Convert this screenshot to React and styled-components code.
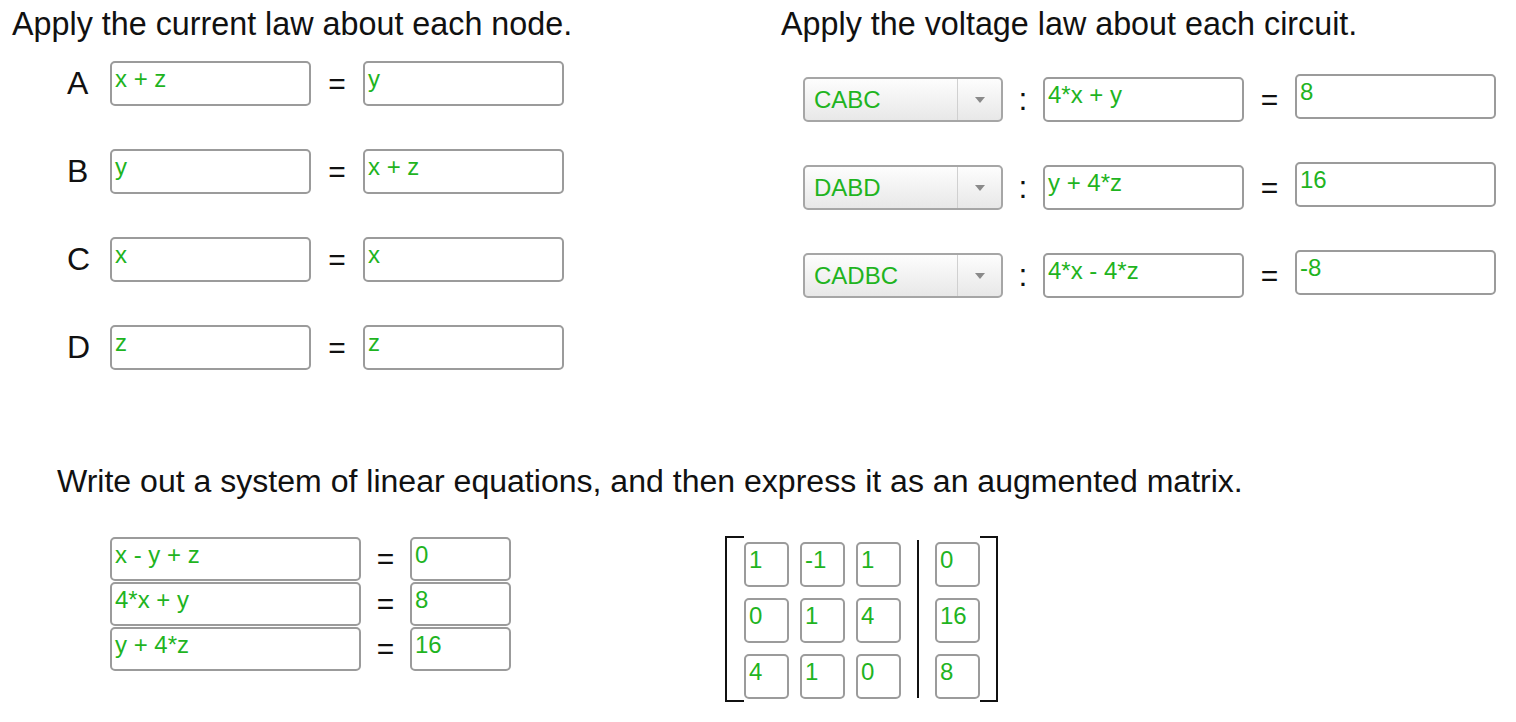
import React from 'react';
import styled, {createGlobalStyle} from 'styled-components';

const GREEN = '#1fb41f';

const nodes = [
  {label: 'A', left: 'x + z', right: 'y'},
  {label: 'B', left: 'y', right: 'x + z'},
  {label: 'C', left: 'x', right: 'x'},
  {label: 'D', left: 'z', right: 'z'},
];

const circuits = [
  {loop: 'CABC', left: '4*x + y', right: '8'},
  {loop: 'DABD', left: 'y + 4*z', right: '16'},
  {loop: 'CADBC', left: '4*x - 4*z', right: '-8'},
];

const system = [
  {left: 'x - y + z', right: '0'},
  {left: '4*x + y', right: '8'},
  {left: 'y + 4*z', right: '16'},
];

const matrix = [
  ['1', '-1', '1'],
  ['0', '1', '4'],
  ['4', '1', '0'],
];
const augmented = ['0', '16', '8'];

const App = () => {
  return (
    <>
      <GlobalStyle />
      <ScPage>
        <ScTopRow>
          <ScSection $width={769}>
            <ScHeading>Apply the current law about each node.</ScHeading>
            <ScNodeList>
              {nodes.map((n) => (
                <ScRow key={n.label}>
                  <ScNodeLabel>{n.label}</ScNodeLabel>
                  <ScField $w={201} $h={45}>{n.left}</ScField>
                  <ScEquals $w={52}>=</ScEquals>
                  <ScField $w={201} $h={45} $drop={1}>{n.right}</ScField>
                </ScRow>
              ))}
            </ScNodeList>
          </ScSection>
          <ScSection>
            <ScHeading>Apply the voltage law about each circuit.</ScHeading>
            <ScCircuitList>
              {circuits.map((c) => (
                <ScCircuitRow key={c.loop}>
                  <ScSelect>
                    <ScSelectValue>{c.loop}</ScSelectValue>
                    <ScSelectToggle>
                      <ScArrow />
                    </ScSelectToggle>
                  </ScSelect>
                  <ScColon>:</ScColon>
                  <ScField $w={201} $h={45} $drop={3}>{c.left}</ScField>
                  <ScEquals $w={51} $drop={3}>=</ScEquals>
                  <ScField $w={201} $h={45}>{c.right}</ScField>
                </ScCircuitRow>
              ))}
            </ScCircuitList>
          </ScSection>
        </ScTopRow>

        <ScBottom>
          <ScHeading $size={32.05}>
            Write out a system of linear equations, and then express it as an augmented matrix.
          </ScHeading>
          <ScBottomRow>
            <ScSystem>
              {system.map((s) => (
                <ScRow key={s.left}>
                  <ScField $w={251} $h={44}>{s.left}</ScField>
                  <ScEquals $w={49}>=</ScEquals>
                  <ScField $w={101} $h={44}>{s.right}</ScField>
                </ScRow>
              ))}
            </ScSystem>

            <ScMatrix>
              <ScBracket $side="left" />
              <ScCells $cols={3}>
                {matrix.flat().map((v, i) => (
                  <ScField key={i} $w={45} $h={45}>{v}</ScField>
                ))}
              </ScCells>
              <ScDivider />
              <ScCells $cols={1}>
                {augmented.map((v, i) => (
                  <ScField key={i} $w={45} $h={45}>{v}</ScField>
                ))}
              </ScCells>
              <ScBracket $side="right" />
            </ScMatrix>
          </ScBottomRow>
        </ScBottom>
      </ScPage>
    </>
  );
};

const GlobalStyle = createGlobalStyle`
  body {
    margin: 0;
    background: #fff;
    font-family: "Liberation Sans", Arial, sans-serif;
    color: #111;
  }
`;

const ScPage = styled.div`
  padding: 6px 0 0 12px;
`;

const ScTopRow = styled.div`
  display: flex;
`;

const ScSection = styled.section`
  width: ${(p) => (p.$width ? `${p.$width}px` : 'auto')};
  flex-shrink: 0;
`;

const ScHeading = styled.h2`
  margin: 0;
  font-size: ${(p) => p.$size || 32.3}px;
  font-weight: 400;
  line-height: 37px;
  color: #111;
  white-space: nowrap;
`;

const ScNodeList = styled.div`
  display: flex;
  flex-direction: column;
  gap: 42px;
  margin-top: 17px;
  padding-left: 55px;
`;

const ScRow = styled.div`
  display: flex;
  align-items: center;
`;

const ScNodeLabel = styled.span`
  width: 43px;
  font-size: 32px;
  line-height: 45px;
`;

const ScField = styled.div`
  box-sizing: border-box;
  width: ${(p) => p.$w}px;
  height: ${(p) => p.$h}px;
  margin-top: ${(p) => p.$drop || 0}px;
  border: 2px solid #9b9b9b;
  border-radius: 5px;
  padding: 2px 3px;
  background: #fff;
  font-size: 24px;
  color: ${GREEN};
  white-space: nowrap;
  overflow: hidden;
`;

const ScEquals = styled.span`
  width: ${(p) => p.$w}px;
  margin-top: ${(p) => p.$drop || 0}px;
  text-align: center;
  font-size: 30px;
  line-height: 45px;
  color: #111;
`;

const ScCircuitList = styled.div`
  display: flex;
  flex-direction: column;
  gap: 40px;
  margin-top: 31px;
  padding-left: 22px;
`;

const ScCircuitRow = styled.div`
  display: flex;
  align-items: flex-start;
`;

const ScSelect = styled.div`
  box-sizing: border-box;
  display: flex;
  width: 200px;
  height: 45px;
  margin-top: 3px;
  border: 2px solid #a6a6a6;
  border-radius: 5px;
  background: linear-gradient(#fdfdfd, #e8e8e8);
`;

const ScSelectValue = styled.div`
  flex: 1;
  display: flex;
  align-items: center;
  padding-left: 9px;
  font-size: 24px;
  color: ${GREEN};
`;

const ScSelectToggle = styled.div`
  width: 43px;
  display: flex;
  align-items: center;
  justify-content: center;
  border-left: 1px solid #d0d0d0;
`;

const ScArrow = styled.span`
  width: 0;
  height: 0;
  border-left: 5px solid transparent;
  border-right: 5px solid transparent;
  border-top: 6px solid #8a8a8a;
`;

const ScColon = styled.span`
  width: 40px;
  margin-top: 3px;
  text-align: center;
  font-size: 32px;
  line-height: 45px;
  color: #111;
`;

const ScBottom = styled.div`
  margin-top: 93px;
  padding-left: 45px;
`;

const ScBottomRow = styled.div`
  display: flex;
  align-items: flex-start;
  gap: 214px;
  margin-top: 36px;
  padding-left: 53px;
`;

const ScSystem = styled.div`
  display: flex;
  flex-direction: column;
`;

const ScMatrix = styled.div`
  display: flex;
  height: 166px;
`;

const ScBracket = styled.div`
  box-sizing: border-box;
  width: ${(p) => (p.$side === 'left' ? 19 : 18)}px;
  border: 2px solid #111;
  ${(p) => (p.$side === 'left' ? 'border-right: none;' : 'border-left: none;')}
`;

const ScCells = styled.div`
  display: grid;
  grid-template-columns: repeat(${(p) => p.$cols}, 45px);
  grid-auto-rows: 45px;
  gap: 11px;
  padding-top: 6px;
`;

const ScDivider = styled.div`
  width: 2px;
  margin: 4px 16px;
  background: #111;
`;

export default App;
